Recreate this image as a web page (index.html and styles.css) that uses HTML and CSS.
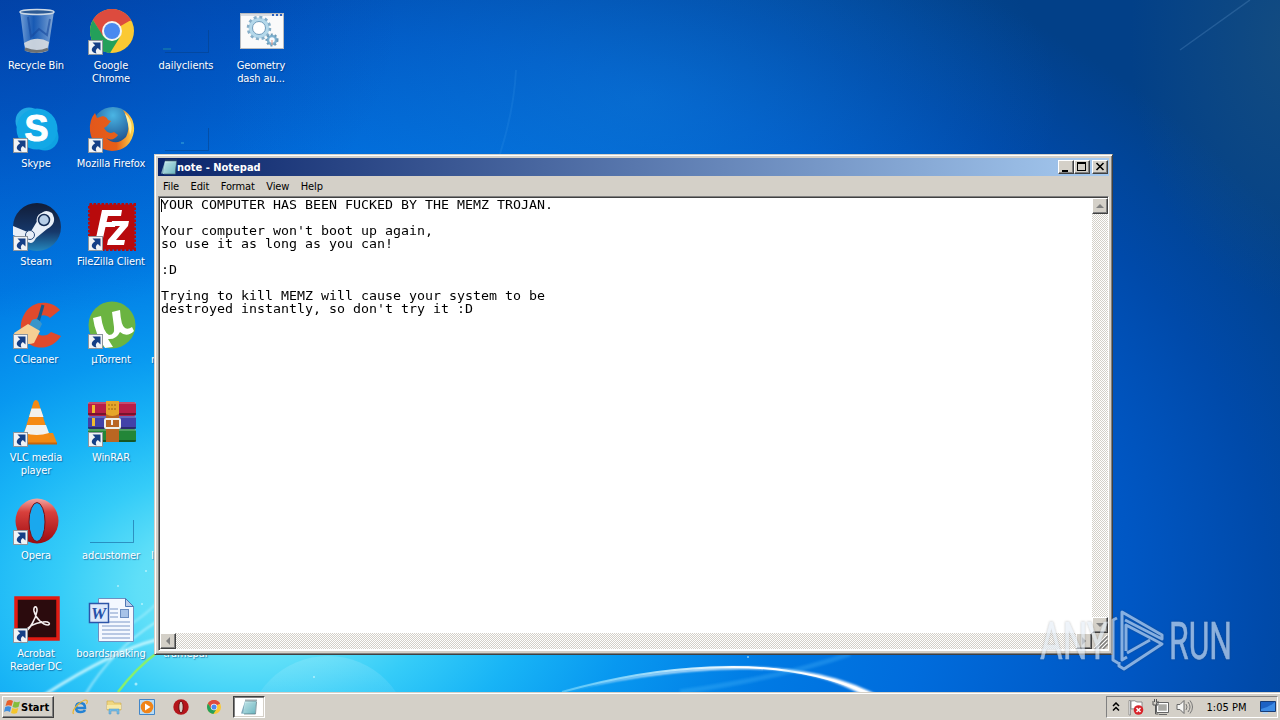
FILE: index.html
```html
<!DOCTYPE html>
<html lang="en">

<head>
  <meta charset="UTF-8">
  <meta name="viewport" content="width=device-width, initial-scale=1.0">
  <title>Desktop</title>
  <link rel="stylesheet" href="styles.css">
</head>

<body>
  <!-- shared symbols -->
  <svg class="defs" width="0" height="0">
    <defs>
      <linearGradient id="redBall" x1="0" y1="0" x2="0" y2="1">
        <stop offset="0" stop-color="#f3a8a4" />
        <stop offset=".3" stop-color="#d8403c" />
        <stop offset="1" stop-color="#9c0a10" />
      </linearGradient>
      <linearGradient id="steam" x1="0" y1="0" x2="0" y2="1">
        <stop offset="0" stop-color="#111d38" />
        <stop offset=".6" stop-color="#16386a" />
        <stop offset="1" stop-color="#2587bd" />
      </linearGradient>
      <linearGradient id="glass" x1="0" y1="0" x2="1" y2="0">
        <stop offset="0" stop-color="#9fc0e6" stop-opacity=".75" />
        <stop offset=".4" stop-color="#2767b8" stop-opacity=".6" />
        <stop offset="1" stop-color="#a9c4e2" stop-opacity=".8" />
      </linearGradient>
      <linearGradient id="pad" x1="0" y1="0" x2="1" y2="1">
        <stop offset="0" stop-color="#d5f0f2" />
        <stop offset="1" stop-color="#62b0bb" />
      </linearGradient>
      <radialGradient id="globe" cx=".5" cy=".2" r=".8">
        <stop offset="0" stop-color="#4ab5e4" />
        <stop offset="1" stop-color="#123a7c" />
      </radialGradient>
      <linearGradient id="fox" x1="0" y1="0" x2="1" y2="0">
        <stop offset="0" stop-color="#e2571c" />
        <stop offset=".6" stop-color="#e65f18" />
        <stop offset="1" stop-color="#ffd84c" />
      </linearGradient>
      <symbol id="shortcut" viewBox="0 0 15 15">
        <rect x=".5" y=".5" width="14" height="14" fill="#f1f3f5" stroke="#8d959d" />
        <path d="M4.500 2.500h8v8l-2.600-2.600C7.800 9.300 7.200 11 8.500 13.500 3 12.500 2 8.500 7.200 5.200z" fill="#153f86" />
      </symbol>
      <symbol id="chrome" viewBox="0 0 44 44">
        <circle cx="22" cy="22" r="22" fill="#fbc933" />
        <path d="M22 22L3 11A22 22 0 0 1 41 11z" fill="#dd4b3e" />
        <path d="M22 12h19A22 22 0 0 0 3 11l9.500 16z" fill="#dd4b3e" />
        <path d="M3 11A22 22 0 0 0 20 44l10-16-8 4-9-5z" fill="#24a05a" />
        <circle cx="22" cy="22" r="10" fill="#f5f5f2" />
        <circle cx="22" cy="22" r="8" fill="#4a89f0" />
      </symbol>
      <symbol id="opera" viewBox="0 0 44 46">
        <ellipse cx="22" cy="23" rx="21.500" ry="22.500" fill="url(#redBall)" />
        <ellipse cx="22" cy="24" rx="8" ry="19.500" fill="#1aa8ee" stroke="#7a1014" />
      </symbol>
      <symbol id="notepad" viewBox="0 0 16 16">
        <path d="M0 14.500L4 2h4v13z" fill="#7fa9bc" />
        <path d="M4 2h11.500L14 15H2z" fill="url(#pad)" />
        <path d="M4.500 5h9.500M4.200 7h9.500M4 9h9.500M3.500 11h10" stroke="#8fc8d0" stroke-width=".6" />
        <path d="M4.500 1.500h11" stroke="#40575f" stroke-width="2" stroke-dasharray="1 1" />
        <path d="M15.500 3L14.500 15H3" fill="none" stroke="#54707a" stroke-width=".7" />
      </symbol>
      <symbol id="ghost" viewBox="0 0 48 48">
        <path d="M2 45.500h43.500V23" fill="none" stroke="#063c7c" stroke-opacity=".45" />
      </symbol>
    </defs>
  </svg>

  <div class="desktop">
    <svg class="wallpaper" width="1280" height="692" viewBox="0 0 1280 692">
      <defs>
        <linearGradient id="ray" x1="0" y1="0" x2="1" y2="0">
          <stop offset="0" stop-color="#8fe4ff" stop-opacity=".5" />
          <stop offset=".6" stop-color="#fff" />
          <stop offset="1" stop-color="#fff" />
        </linearGradient>
        <linearGradient id="bubble" x1="0" y1="0" x2="0" y2="1">
          <stop offset="0" stop-color="#fff" stop-opacity=".14" />
          <stop offset=".4" stop-color="#fff" stop-opacity=".02" />
        </linearGradient>
        <filter id="soft" x="-10%" y="-50%" width="120%" height="200%">
          <feGaussianBlur stdDeviation="1.200" />
        </filter>
      </defs>
      <circle cx="328" cy="738" r="82" fill="url(#bubble)" />
      <path d="M562 692C630 674 700 666 750 667C810 668 848 680 880 696H864C836 680 800 669 750 669C700 669 640 674 562 692z" fill="#fff" filter="url(#soft)" />
      <path d="M562 692Q640 670 710 667.500Q800 663 870 694" fill="none" stroke="url(#ray)" stroke-width="2" />
      <path d="M680 692Q780 678 850 654" fill="none" stroke="#5bc6ff" stroke-opacity=".25" stroke-width="5" filter="url(#soft)" />
      <g fill="none" filter="url(#soft)">
        <path d="M44 695Q115 650 156 640" stroke="#d8fbff" stroke-width="3" stroke-opacity=".8" />
        <path d="M85 695Q112 650 156 622" stroke="#d8fbff" stroke-width="2" stroke-opacity=".6" />
        <path d="M98 640Q132 628 156 604" stroke="#d8fbff" stroke-width="2" stroke-opacity=".4" />
      </g>
      <path d="M118 692Q136 668 158 652" fill="none" stroke="#86ef70" stroke-width="2.500" />
      <g fill="#e8ffff" fill-opacity=".6">
        <circle cx="118" cy="586" r="1" />
        <circle cx="146" cy="571" r="1" />
        <circle cx="136" cy="684" r="1.500" />
        <circle cx="142" cy="604" r="1" />
        <circle cx="314" cy="677" r="1" />
        <circle cx="748" cy="657" r="1" />
      </g>
      <path d="M1180 50L1250 0" stroke="#6fa4d8" stroke-opacity=".25" stroke-width="1.500" />
      <path d="M516 70Q514 110 500 154" fill="none" stroke="#4ba8f0" stroke-opacity=".14" stroke-width="2" />
    </svg>

    <div class="icons">
      <div class="icon">
        <svg viewBox="0 0 48 48">
          <path d="M7 4l5 40q11 4 23 0l6-40z" fill="url(#glass)" />
          <path d="M11 36q13-8 25-1l-2 9q-10 4-21 0z" fill="#d9dde0" fill-opacity=".9" />
          <path d="M15 10l3 20 8-8 8 6 3-16" fill="none" stroke="#16479c" stroke-opacity=".6" stroke-width="2" />
          <ellipse cx="24" cy="5" rx="17" ry="2.500" fill="#2c5a94" stroke="#cdd9e6" stroke-width="1.500" />
          <path d="M12 42q12 5 23 0" fill="none" stroke="#6d7174" stroke-width="3" />
        </svg>
        <span>Recycle Bin</span>
      </div>
      <div class="icon">
        <svg viewBox="0 0 48 48">
          <use href="#chrome" x="2" y="2" width="44" height="44" />
          <use href="#shortcut" x="0" y="33" width="15" height="15" />
        </svg>
        <span>Google Chrome</span>
      </div>
      <div class="icon">
        <svg viewBox="0 0 48 48"><use href="#ghost" width="48" height="48" />
          <path d="M0 42h8" stroke="#2aa3a0" stroke-opacity=".7" />
        </svg>
        <span>dailyclients</span>
      </div>
      <div class="icon">
        <svg viewBox="0 0 48 48">
          <rect x="2.500" y="6.500" width="43" height="35" fill="#fafafa" stroke="#b9bcc0" />
          <path d="M3 8h42" stroke="#d9dde2" stroke-width="2" />
          <path d="M34 8h2m2 0h2m2 0h2" stroke="#2a61c0" stroke-width="2" />
          <circle cx="21" cy="21" r="8.500" fill="none" stroke="#b4d8ea" stroke-width="4" />
          <circle cx="21" cy="21" r="11" fill="none" stroke="#86aec8" stroke-width="2.500" stroke-dasharray="3 2.760" />
          <circle cx="21" cy="21" r="6.500" fill="#fff" stroke="#6f9cbc" />
          <circle cx="34" cy="33" r="4" fill="#f8fbff" stroke="#7eb2d0" stroke-width="2.500" />
          <circle cx="34" cy="33" r="5.500" fill="none" stroke="#6e9cb8" stroke-width="2" stroke-dasharray="2 2" />
          <path d="M34 33v5" stroke="#e89c88" />
        </svg>
        <span>Geometry dash au...</span>
      </div>

      <div class="icon">
        <svg viewBox="0 0 48 48">
          <circle cx="16" cy="16" r="13.500" fill="#22a9e4" />
          <circle cx="32" cy="32" r="13.500" fill="#0ea2e2" />
          <circle cx="24" cy="24" r="20.500" fill="#12a8e6" />
          <text x="23.500" y="36" class="skype_s">S</text>
          <use href="#shortcut" x="0" y="33" width="15" height="15" />
        </svg>
        <span>Skype</span>
      </div>
      <div class="icon">
        <svg viewBox="0 0 48 48">
          <circle cx="25" cy="23" r="21" fill="url(#globe)" />
          <path d="M35 5Q47 12 46 26 43 45 24 46 4 44 2 26 1 15 7 8l2 5 6-2q4 1 5 4l3 1-4 5-3 2q4 7 10 4l4 3q-5 7-12 3 10 9 20-1Q44 20 35 5z" fill="url(#fox)" />
          <path d="M37 8q10 10 5 22-2-13-5-22z" fill="#fff0a0" />
          <use href="#shortcut" x="0" y="33" width="15" height="15" />
        </svg>
        <span>Mozilla Firefox</span>
      </div>
      <div class="icon">
        <svg viewBox="0 0 48 48"><use href="#ghost" width="48" height="48" />
          <path d="M18 38h3" stroke="#3aa8d8" />
        </svg>
      </div>
      <div class="icon"></div>

      <div class="icon">
        <svg viewBox="0 0 48 48">
          <circle cx="24" cy="24" r="24" fill="url(#steam)" />
          <path d="M0 23l17 7 9-15q4-11 13-5 6 10-5 16l-11 9q-4 9-11 2L0 32z" fill="#e8eff8" />
          <circle cx="31" cy="17" r="7.500" fill="#e8eff8" />
          <circle cx="31" cy="17" r="5.500" fill="#b8cfe8" stroke="#142c54" stroke-width="1.500" />
          <circle cx="17" cy="32" r="4.500" fill="#e8eff8" stroke="#284a7a" stroke-width="1" />
          <use href="#shortcut" x="0" y="33" width="15" height="15" />
        </svg>
        <span>Steam</span>
      </div>
      <div class="icon">
        <svg viewBox="0 0 48 48">
          <rect x="1.500" y="1.500" width="45" height="45" fill="#b80a0c" stroke="#b80a0c" stroke-width="3" stroke-dasharray="2.500 1.500" />
          <rect x="2.500" y="2.500" width="43" height="43" fill="#b80a0c" />
          <path d="M14 7h20l-1 6H20l-1.500 6H28l-1 5h-9.500L15 35H8z" fill="#fff" />
          <path d="M24 18h17l-1 5-12 14h9l-1 5H19l1-5 12-14h-9z" fill="#fff" />
          <use href="#shortcut" x="0" y="33" width="15" height="15" />
        </svg>
        <span>FileZilla Client</span>
      </div>
      <div class="icon"></div>
      <div class="icon"></div>

      <div class="icon">
        <svg viewBox="0 0 48 48">
          <path d="M47 9C38-1 20-1 12 12 4 25 8 38 18 44 29 50 42 45 48 35L38 31C32 38 20 34 21 24 22 14 32 12 37 17z" fill="#e04a2c" />
          <path d="M30 4l-5 17" stroke="#155a8c" stroke-width="3" />
          <path d="M19 19q6-3 10 4l-4 8-9-6z" fill="#3995cb" />
          <path d="M15 23l12 7-6 12q-8 3-18-3l-2-7z" fill="#f6cf94" />
          <use href="#shortcut" x="0" y="33" width="15" height="15" />
        </svg>
        <span>CCleaner</span>
      </div>
      <div class="icon">
        <svg viewBox="0 0 48 48">
          <circle cx="24" cy="24" r="23.500" fill="#6bb441" />
          <path d="M5 17l8-2q2 16 8 19 6 0 5-8L24 11l8-2q1 16 5 18 3 2 7-1l2 4q-7 7-14 1-4 8-12 7l5 8-8 1Q7 33 5 17z" fill="#fff" />
          <use href="#shortcut" x="0" y="33" width="15" height="15" />
        </svg>
        <span>µTorrent</span>
      </div>
      <div class="icon cut"><span>r</span></div>
      <div class="icon"></div>

      <div class="icon">
        <svg viewBox="0 0 48 48">
          <path d="M7 34h33l4 10H4z" fill="#f08a14" />
          <path d="M4 43.500h40v2H4z" fill="#c86408" />
          <path d="M20.500 3q2.500-4 5 0l11 36q-12 5-27 0z" fill="#f58a14" />
          <path d="M18.500 9.500h9l3 8.500H16zM14 26h19l3 8q-12 4-25 0z" fill="#f2f1ee" />
          <use href="#shortcut" x="0" y="33" width="15" height="15" />
        </svg>
        <span>VLC media player</span>
      </div>
      <div class="icon">
        <svg viewBox="0 0 48 48">
          <rect y="3" width="48" height="14" rx="2" fill="#b71f48" />
          <rect y="17" width="48" height="13" rx="2" fill="#4242a8" />
          <rect y="30" width="48" height="13" rx="2" fill="#238638" />
          <path d="M0 4h48M0 18h48M0 31h48" stroke="#fff" stroke-opacity=".2" stroke-width="2" />
          <path d="M0 15h48M0 29h48M0 42h48" stroke="#000" stroke-opacity=".35" stroke-width="2" />
          <path d="M4 6h3v8H4zm0 13h3v8H4z" fill="#f0bb30" />
          <path d="M18 2h13v41H18z" fill="#b96622" />
          <path d="M18 2h13v13q-7 4-13 0z" fill="#e6a62a" />
          <path d="M20 6h9M20 10h9" stroke="#9a6310" stroke-dasharray="2 1" />
          <rect x="17" y="20" width="15" height="9" rx="1" fill="none" stroke="#efefe9" stroke-width="2" />
          <path d="M24 21v5" stroke="#eee" stroke-width="2" />
          <use href="#shortcut" x="0" y="33" width="15" height="15" />
        </svg>
        <span>WinRAR</span>
      </div>
      <div class="icon"></div>
      <div class="icon"></div>

      <div class="icon">
        <svg viewBox="0 0 48 48">
          <use href="#opera" x="2" y="1" width="44" height="46" />
          <use href="#shortcut" x="0" y="33" width="15" height="15" />
        </svg>
        <span>Opera</span>
      </div>
      <div class="icon">
        <svg viewBox="0 0 48 48"><use href="#ghost" width="48" height="48" /></svg>
        <span>adcustomer</span>
      </div>
      <div class="icon cut"><span>l</span></div>
      <div class="icon"></div>

      <div class="icon">
        <svg viewBox="0 0 48 48">
          <rect x="3" y="3" width="42" height="41" fill="#2b0b0d" stroke="#e11b12" stroke-width="3.500" />
          <path d="M12 37c5-3 11-14 12-21 .5-6-4-5-3 0 2 8 9 14 14 14 3-1 1-4-5-3-8 1-14 3-18 10z" fill="none" stroke="#f4eeee" stroke-width="1.600" />
          <use href="#shortcut" x="0" y="33" width="15" height="15" />
        </svg>
        <span>Acrobat Reader DC</span>
      </div>
      <div class="icon">
        <svg viewBox="0 0 48 48">
          <path d="M10.500 3.500h27l8 8v35h-35z" fill="#f4f8ff" stroke="#6d8fc0" />
          <path d="M37.500 3.500l8 8h-8z" fill="#b9cdea" stroke="#5077b4" />
          <path d="M22 14h8M22 18h8M22 22h8M14 27h28M14 31h28M14 35h28M14 39h28M14 43h28" stroke="#7c98c8" />
          <rect x="32.500" y="14.500" width="8" height="8" fill="#a8c3e8" stroke="#6a8cc0" />
          <rect x="1.500" y="8.500" width="19" height="19" fill="#dce8fb" stroke="#2c55a8" stroke-width="1.500" />
          <text x="10.500" y="24" class="word_w">W</text>
        </svg>
        <span>boardsmaking</span>
      </div>
      <div class="icon"><svg viewBox="0 0 48 48"></svg><span>tramepar</span></div>
    </div>

    <div class="window">
      <div class="title_bar">
        <svg width="16" height="16"><use href="#notepad" width="16" height="16" /></svg>
        <span class="title">note - Notepad</span>
        <div class="title_btn">
          <svg width="12" height="10"><path d="M2 8h6v2H2z" /></svg>
        </div>
        <div class="title_btn">
          <svg width="12" height="10"><path d="M1 0h9v9H1zM2 2v6h7V2z" fill-rule="evenodd" /></svg>
        </div>
        <div class="title_btn close">
          <svg width="12" height="10"><path d="M2.500 1l7 7m0-7l-7 7" stroke="#000" stroke-width="1.600" /></svg>
        </div>
      </div>
      <div class="menu">
        <span>File</span><span>Edit</span><span>Format</span><span>View</span><span>Help</span>
      </div>
      <div class="editor">
        <div class="text_area">
          <i class="caret"></i>
          <pre>YOUR COMPUTER HAS BEEN FUCKED BY THE MEMZ TROJAN.

Your computer won't boot up again,
so use it as long as you can!

:D

Trying to kill MEMZ will cause your system to be
destroyed instantly, so don't try it :D</pre>
        </div>
        <div class="scroll vertical">
          <div class="scroll_btn"><svg width="8" height="8"><path d="M0 6h8L4 2z" /></svg></div>
          <div class="scroll_btn"><svg width="8" height="8"><path d="M0 2h8L4 6z" /></svg></div>
        </div>
        <div class="scroll horizontal">
          <div class="scroll_btn"><svg width="8" height="8"><path d="M6 0v8L2 4z" /></svg></div>
          <div class="scroll_btn"><svg width="8" height="8"><path d="M2 0v8l4-4z" /></svg></div>
        </div>
        <div class="grip">
          <svg width="16" height="16">
            <path d="M3 16L16 3M7 16l9-9M11 16l5-5" stroke="#808080" stroke-width="1.500" />
            <path d="M2 15L15 2M6 15l9-9M10 15l5-5" stroke="#fff" />
          </svg>
        </div>
      </div>
    </div>
  </div>

  <div class="taskbar">
    <div class="start">
      <svg width="17" height="16" viewBox="0 0 17 16">
        <path d="M3 2q3-2 6 0L7.500 7q-3-1.500-6 0z" fill="#e8602a" />
        <path d="M10 2.500q3 1.500 6 0L14.500 8q-3 1.500-6 0z" fill="#84bd3c" />
        <path d="M1.200 8q3-1.500 6 0L6 13q-3-2-6 0z" fill="#3f8ede" />
        <path d="M8.300 9q3 1.500 6 0L13 14q-3 1.500-6 0z" fill="#f4c52c" />
      </svg>
      <span>Start</span>
    </div>
    <div class="quick">
      <svg viewBox="0 0 16 16">
        <path d="M4 9h9Q13 4 8.500 4 4 4 4 9q0 4 4.500 4Q12 13 13 11" fill="none" stroke="#2382d4" stroke-width="2.500" />
        <path d="M1.500 15Q-.5 12 6 5.500 13-.5 15 1.500q.8 1.500-.6 3.500" fill="none" stroke="#e9b42c" stroke-width="1.200" />
      </svg>
      <svg viewBox="0 0 16 16">
        <path d="M1 2h6l1 2h7v7H1z" fill="#efd680" stroke="#c9a848" stroke-width=".6" />
        <path d="M1 6h14v4H1z" fill="#f8e9a6" />
        <path d="M3 15v-5h10v5h-2v-3H5v3z" fill="#74bce6" stroke="#4c94c4" stroke-width=".5" />
      </svg>
      <svg viewBox="0 0 16 16">
        <path d="M.5.500h15v15H.5z" fill="#b8dcf6" stroke="#4286c8" />
        <circle cx="8" cy="8" r="6.300" fill="#f08418" />
        <path d="M6 4.500l5.500 3.500L6 11.500z" fill="#fff" />
      </svg>
      <svg viewBox="0 0 16 16">
        <circle cx="8" cy="8" r="7.700" fill="#b4151b" />
        <ellipse cx="8" cy="8" rx="2.200" ry="5.800" fill="#d4d0c8" stroke="#6d080c" />
      </svg>
      <svg viewBox="0 0 16 16"><use href="#chrome" x="1" y="1" width="14" height="14" /></svg>
    </div>
    <div class="task">
      <svg width="16" height="16"><use href="#notepad" width="16" height="16" /></svg>
    </div>
    <div class="tray">
      <svg width="8" height="10" viewBox="0 0 8 10"><path d="M1 4l3-3 3 3M1 8.500l3-3 3 3" fill="none" stroke="#000" stroke-width="1.500" /></svg>
      <svg width="18" height="17" viewBox="0 0 18 17">
        <path d="M2 1.500h1.500V16H2z" fill="#fff" stroke="#777" stroke-width=".7" />
        <path d="M4 2q4-1 6 1l5 0v8l-5 0q-3-2-6-1z" fill="#fff" stroke="#777" stroke-width=".8" />
        <circle cx="11.500" cy="11" r="4.800" fill="#d8242a" />
        <path d="M9.500 9l4 4m0-4l-4 4" stroke="#fff" stroke-width="1.500" />
      </svg>
      <svg width="17" height="16" viewBox="0 0 17 16">
        <path d="M5.500 4.500h10v8h-10z" fill="#a8a8a4" stroke="#fff" stroke-width="1.500" />
        <path d="M4.500 3.500h12v10h-12zM7 15.500h8" fill="none" stroke="#666" />
        <path d="M1 2v4h5V2M2.500 0v3M4.500 0v3M3.500 6v9h3" fill="none" stroke="#555" />
      </svg>
      <svg width="17" height="16" viewBox="0 0 17 16">
        <path d="M1 5.500h3l4-4v13l-4-4H1z" fill="#f6f6f4" stroke="#686868" />
        <path d="M10 5q2 3 0 6M12 3q4 5 0 10M14 1.500q5 6.500 0 13" fill="none" stroke="#777" />
      </svg>
      <span class="clock">1:05 PM</span>
      <svg width="16" height="14" viewBox="0 0 16 14">
        <path d="M.5 1.500h15v10H.5z" fill="#1d62c4" stroke="#173c76" />
        <path d="M1 9Q8 8 15 2v9H1z" fill="#3d8be4" />
        <path d="M3 12h5v2H2z" fill="#b8d4ec" />
      </svg>
    </div>
  </div>

  <!-- watermark over everything -->
  <svg class="watermark" width="245" height="70" viewBox="1035 605 245 70">
    <g class="mark_text">
      <text x="1040" y="659" textLength="68" lengthAdjust="spacingAndGlyphs">ANY</text>
      <text x="1169" y="659" textLength="63" lengthAdjust="spacingAndGlyphs">RUN</text>
    </g>
    <path d="M1117 618l-4 2v40l5 3M1127 657l-5 3V612l40 23v4l-37-19M1126 651v-26l36 19-38 25-5-3v-4M1127 653l23-13" fill="none" stroke="#d9e6f4" stroke-width="3" stroke-linejoin="round" />
  </svg>
</body>

</html>
```
FILE: styles.css
```css
* {
  margin: 0;
  padding: 0;
  box-sizing: border-box;
}

body {
  width: 1280px;
  height: 720px;
  overflow: hidden;
  display: flex;
  flex-direction: column;
  position: relative;
  font-family: "DejaVu Sans Condensed", "DejaVu Sans", sans-serif;
  font-stretch: condensed;
  font-size: 11px;
  color: #000;
}

svg {
  display: block;
  flex-shrink: 0;
}

.defs {
  position: absolute;
}

.desktop {
  height: 692px;
  position: relative;
  overflow: hidden;
  background:
    radial-gradient(ellipse 420px 240px at 640px 100px, rgba(20, 140, 225, .35), transparent),
    radial-gradient(ellipse 160px 260px at 1290px 40px, rgba(40, 90, 120, .45), transparent),
    radial-gradient(ellipse 400px 320px at 0 0, rgba(4, 50, 150, .45), transparent),
    radial-gradient(ellipse 1130px 720px at 250px 590px, #7ae8f6 0, #5fdff8 10%, #35ccf8 17%, #18b4f6 25%, #0898f0 34%, #007ae4 47%, #006cdc 60%, #0057c4 78%, #004aaa 90%, #024088 105%);
}

.wallpaper {
  position: absolute;
  top: 0;
  left: 0;
}

/* desktop icons */
.icons {
  position: relative;
  width: 300px;
  margin-left: -1px;
  padding-top: 7px;
  display: grid;
  grid-template-columns: repeat(4, 75px);
  grid-auto-rows: 98px;
}

.icon {
  display: flex;
  flex-direction: column;
  align-items: center;
  color: #fff;
  line-height: 13px;
  text-align: center;
}

.icon svg {
  width: 48px;
  height: 48px;
  margin: 0 0 4px 1px;
}

.icon span {
  max-width: 70px;
  margin-right: 1px;
  letter-spacing: -.1px;
  text-shadow: 1px 1px 1px rgba(0, 40, 100, .5);
}

.icon.cut {
  align-items: flex-start;
  padding: 52px 0 0 2px;
}

.skype_s {
  font: bold 36px "Liberation Sans", sans-serif;
  text-anchor: middle;
  fill: #fff;
  stroke: #fff;
}

.word_w {
  font: italic bold 17px "Liberation Serif", serif;
  text-anchor: middle;
  fill: #2450a8;
}

/* notepad */
.window {
  position: absolute;
  left: 154px;
  top: 154px;
  width: 959px;
  height: 501px;
  padding: 3px;
  background: #d4d0c8;
  border: 1px solid;
  border-color: #d4d0c8 #404040 #404040 #d4d0c8;
  box-shadow: inset 1px 1px #fff, inset -1px -1px #808080;
  display: flex;
  flex-direction: column;
}

.title_bar {
  height: 18px;
  display: flex;
  align-items: center;
  padding: 0 1px 0 3px;
  background: linear-gradient(to right, #0a246a, #a6caf0);
}

.title {
  flex: 1;
  color: #fff;
  font-weight: bold;
}

.title_btn,
.scroll_btn,
.start {
  background: #d4d0c8;
  border: 1px solid;
  border-color: #fff #404040 #404040 #fff;
  box-shadow: inset -1px -1px #808080;
}

.title_btn {
  width: 16px;
  height: 14px;
  padding: 1px;
}

.title_btn.close {
  margin-left: 2px;
}

.menu {
  height: 20px;
  display: flex;
  align-items: center;
  padding-left: 5px;
  gap: 11.500px;
  letter-spacing: -.12px;
}

.editor {
  flex: 1;
  display: grid;
  grid-template-columns: 1fr 16px;
  grid-template-rows: 1fr 16px;
  background: #fff;
  border: 1px solid;
  border-color: #808080 #fff #fff #808080;
  box-shadow: inset 1px 1px #404040;
  padding: 1px 0 1px 1px;
}

.text_area {
  position: relative;
  padding: 1px 0 0 1px;
}

.text_area pre {
  font: 11.5px/13px "DejaVu Sans Mono", monospace;
  transform: scaleX(1.1556);
  transform-origin: left top;
}

.caret {
  position: absolute;
  left: 1px;
  top: 1px;
  width: 1px;
  height: 13px;
  background: #000;
}

.scroll {
  display: flex;
  justify-content: space-between;
  background: repeating-conic-gradient(#fff 0 25%, #d4d0c8 0 50%) 0 0 / 2px 2px;
}

.vertical {
  flex-direction: column;
}

.scroll_btn {
  width: 16px;
  height: 16px;
  display: flex;
  align-items: center;
  justify-content: center;
  fill: #808080;
}

.grip {
  background: #d4d0c8;
}

/* taskbar */
.taskbar {
  height: 28px;
  display: flex;
  align-items: center;
  padding: 1px 2px 0 2px;
  background: #d4d0c8;
  border-top: 1px solid #d4d0c8;
  box-shadow: inset 0 1px #fff;
}

.start {
  width: 52px;
  height: 22px;
  display: flex;
  align-items: center;
  padding-left: 1px;
  font-weight: bold;
}

.quick {
  display: flex;
  gap: 17.500px;
  margin-left: 18px;
}

.quick svg {
  width: 16px;
  height: 16px;
}

.task {
  width: 32px;
  height: 22px;
  margin-left: 11px;
  display: flex;
  align-items: center;
  justify-content: center;
  background: #fff;
  border: 1px solid;
  border-color: #404040 #fff #fff #404040;
  box-shadow: inset 1px 1px #808080, inset -1px -1px #d4d0c8;
}

.tray {
  width: 172px;
  height: 22px;
  margin-left: auto;
  display: flex;
  align-items: center;
  gap: 7px;
  padding: 0 1px 0 5px;
  border: 1px solid;
  border-color: #808080 #fff #fff #808080;
}

.clock {
  margin: 0 auto;
}

.watermark {
  position: absolute;
  left: 1035px;
  top: 605px;
  opacity: .62;
  filter: drop-shadow(0 0 1px rgba(60, 60, 60, .5));
}

.mark_text {
  font: 400 52px Roboto, sans-serif;
  fill: #e4edf6;
  stroke: #e4edf6;
  stroke-width: .5px;
}
```
